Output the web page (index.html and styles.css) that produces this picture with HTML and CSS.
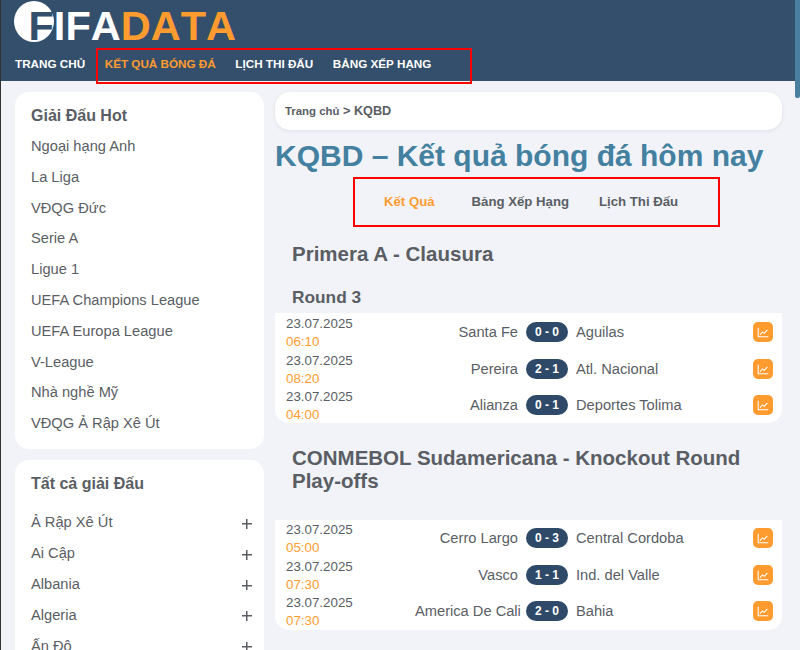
FILE: index.html
```html
<!DOCTYPE html>
<html lang="vi">
<head>
<meta charset="utf-8">
<title>KQBD</title>
<link rel="stylesheet" href="styles.css">
</head>
<body>
<div class="edge"></div>
<div class="scroll-thumb"></div>
<header class="header">
  <div class="logo">
    <span class="logo-f">F</span><span class="logo-white">IFA</span><span class="logo-orange">DATA</span>
  </div>
  <nav class="nav">
    <a class="nav-item">TRANG CHỦ</a>
    <a class="nav-item nav-active">KẾT QUẢ BÓNG ĐÁ</a>
    <a class="nav-item">LỊCH THI ĐẤU</a>
    <a class="nav-item">BẢNG XẾP HẠNG</a>
    <span class="red-box nav-box"></span>
  </nav>
</header>
<div class="layout">
  <aside class="sidebar">
    <section class="card hot">
      <h3 class="side-title">Giải Đấu Hot</h3>
      <ul class="side-list">
        <li>Ngoại hạng Anh</li>
        <li>La Liga</li>
        <li>VĐQG Đức</li>
        <li>Serie A</li>
        <li>Ligue 1</li>
        <li>UEFA Champions League</li>
        <li>UEFA Europa League</li>
        <li>V-League</li>
        <li>Nhà nghề Mỹ</li>
        <li>VĐQG Ả Rập Xê Út</li>
      </ul>
    </section>
    <section class="card all">
      <h3 class="side-title">Tất cả giải Đấu</h3>
      <ul class="side-list plus-list">
        <li><span>Ả Rập Xê Út</span><i class="plus"></i></li>
        <li><span>Ai Cập</span><i class="plus"></i></li>
        <li><span>Albania</span><i class="plus"></i></li>
        <li><span>Algeria</span><i class="plus"></i></li>
        <li><span>Ấn Độ</span><i class="plus"></i></li>
      </ul>
    </section>
  </aside>
  <main class="main">
    <div class="crumb"><span class="crumb-home">Trang chủ</span> &gt; KQBD</div>
    <h1 class="page-title">KQBD – Kết quả bóng đá hôm nay</h1>
    <div class="tabs">
      <a class="tab tab-active">Kết Quả</a>
      <a class="tab">Bảng Xếp Hạng</a>
      <a class="tab">Lịch Thi Đấu</a>
      <span class="red-box tabs-box"></span>
    </div>
    <h2 class="league">Primera A - Clausura</h2>
    <h3 class="round">Round 3</h3>
    <div class="matches">
      <div class="match"><div class="when"><div>23.07.2025</div><div class="time">06:10</div></div><div class="home">Santa Fe</div><div class="score">0 - 0</div><div class="away">Aguilas</div><span class="stat"><svg viewBox="0 0 16 16"><path d="M2.5 3v10.5H14M4.5 11l3-3 2 1.5 3.5-4"/></svg></span></div>
      <div class="match"><div class="when"><div>23.07.2025</div><div class="time">08:20</div></div><div class="home">Pereira</div><div class="score">2 - 1</div><div class="away">Atl. Nacional</div><span class="stat"><svg viewBox="0 0 16 16"><path d="M2.5 3v10.5H14M4.5 11l3-3 2 1.5 3.5-4"/></svg></span></div>
      <div class="match"><div class="when"><div>23.07.2025</div><div class="time">04:00</div></div><div class="home">Alianza</div><div class="score">0 - 1</div><div class="away">Deportes Tolima</div><span class="stat"><svg viewBox="0 0 16 16"><path d="M2.5 3v10.5H14M4.5 11l3-3 2 1.5 3.5-4"/></svg></span></div>
    </div>
    <h2 class="league league-two">CONMEBOL Sudamericana - Knockout Round Play-offs</h2>
    <div class="matches">
      <div class="match"><div class="when"><div>23.07.2025</div><div class="time">05:00</div></div><div class="home">Cerro Largo</div><div class="score">0 - 3</div><div class="away">Central Cordoba</div><span class="stat"><svg viewBox="0 0 16 16"><path d="M2.5 3v10.5H14M4.5 11l3-3 2 1.5 3.5-4"/></svg></span></div>
      <div class="match"><div class="when"><div>23.07.2025</div><div class="time">07:30</div></div><div class="home">Vasco</div><div class="score">1 - 1</div><div class="away">Ind. del Valle</div><span class="stat"><svg viewBox="0 0 16 16"><path d="M2.5 3v10.5H14M4.5 11l3-3 2 1.5 3.5-4"/></svg></span></div>
      <div class="match"><div class="when"><div>23.07.2025</div><div class="time">07:30</div></div><div class="home">America De Cali</div><div class="score">2 - 0</div><div class="away">Bahia</div><span class="stat"><svg viewBox="0 0 16 16"><path d="M2.5 3v10.5H14M4.5 11l3-3 2 1.5 3.5-4"/></svg></span></div>
    </div>
  </main>
</div>
</body>
</html>
```
FILE: styles.css
```css
* { box-sizing: border-box; }
html, body { height: 650px; overflow: hidden; }
body {
  margin: 0;
  background: #f1f3f8;
  color: #5a5e64;
  font-family: "Liberation Sans", Arial, sans-serif;
  font-size: 14.67px;
  position: relative;
}
.edge { position: absolute; left: 0; top: 0; width: 1px; height: 650px; background: #333; z-index: 3; }
.scroll-thumb { position: absolute; right: 0; top: 0; width: 5px; height: 98px; background: #4a7fa0; border-radius: 0 0 2px 2px; z-index: 3; }
.header { height: 81px; background: #344f6b; padding-left: 15px; position: relative; }
.logo { height: 49px; padding: 3px 0 0 13.5px; display: flex; align-items: flex-start; font-weight: 700; font-size: 41.5px; line-height: 46px; white-space: nowrap; isolation: isolate; font-kerning: none; }
.logo-f { color: #344f6b; position: relative; }
.logo-f::before { content: ""; position: absolute; left: -14.5px; top: -2px; width: 40px; height: 41px; border-radius: 50%; background: #fff; z-index: -1; }
.logo-white { color: #fff; }
.logo-orange { color: #ff9b2f; }
.nav { display: flex; gap: 19.6px; height: 28px; align-items: center; position: relative; }
.nav-item { color: #fff; font-size: 11.7px; font-weight: 700; white-space: nowrap; }
.nav-active { color: #ff9b2f; }
.red-box { position: absolute; border: 2px solid #f00; pointer-events: none; }
.nav-box { left: 81px; top: -1px; width: 376px; height: 36px; }
.layout { display: flex; gap: 11px; padding: 11px 18px 0 15px; align-items: flex-start; }
.sidebar { width: 249px; flex: none; display: flex; flex-direction: column; gap: 11px; }
.card { background: #fff; border-radius: 14px; padding: 13px 16px 0; }
.hot { height: 357px; }
.all { height: 300px; }
.side-title { margin: 0; font-size: 16px; line-height: 22px; font-weight: 700; color: #5a5e64; }
.side-list { list-style: none; margin: 0; padding: 0; }
.side-list li { height: 30.8px; line-height: 30.8px; white-space: nowrap; }
.hot .side-list { margin-top: 4px; }
.all .side-list { margin-top: 12.4px; }
.plus-list li { display: flex; justify-content: space-between; align-items: center; margin-right: -4px; }
.plus { width: 10px; height: 10px; position: relative; flex: none; margin-top: 2px; background: linear-gradient(#5a5e64, #5a5e64) center/10px 1.5px no-repeat, linear-gradient(#5a5e64, #5a5e64) center/1.5px 10px no-repeat; }
.main { width: 507px; flex: none; }
.crumb { height: 38px; background: #fff; border-radius: 15px; line-height: 38px; padding-left: 10px; font-size: 12.7px; font-weight: 700; box-shadow: 0 1px 4px rgba(0,0,0,.08); color: #5a5e64; }
.crumb-home { font-size: 11.4px; }
.page-title { margin: 7px 0 0; font-size: 30px; line-height: 37px; font-weight: 700; color: #44809f; white-space: nowrap; }
.tabs { display: flex; height: 49px; margin-top: 3px; position: relative; align-items: center; padding-left: 109px; gap: 30px; font-size: 13.2px; font-weight: 700; }
.tab { white-space: nowrap; }
.tab-active { color: #ff9b2f; margin-right: 7px; }
.tabs-box { left: 78px; top: 0; width: 367px; height: 50px; }
.league { margin: 16px 0 0 17px; font-size: 20.5px; line-height: 24px; font-weight: 700; color: #5a5e64; }
.round { margin: 21px 0 0 17px; font-size: 17.3px; line-height: 20px; font-weight: 700; }
.matches { background: #fff; border-radius: 0 0 14px 14px; margin-top: 6px; padding-top: 2px; height: 110px; }
.match { display: flex; height: 36.5px; align-items: center; padding: 0 9px 2px 11px; }
.when { width: 129px; flex: none; line-height: 18px; font-size: 13.33px; margin-top: 2px; }
.time { color: #ff9b2f; }
.home { width: 103px; text-align: right; white-space: nowrap; flex: none; }
.score { width: 42px; height: 20px; line-height: 20px; flex: none; margin: 0 8px; text-align: center; color: #fff; background: #2e4a68; border-radius: 10px; font-weight: 700; font-size: 12px; }
.away { flex: 1; white-space: nowrap; }
.stat { width: 20px; height: 20px; background: #ff9b2f; border-radius: 5px; flex: none; display: flex; align-items: center; justify-content: center; }
.stat svg { width: 14px; height: 14px; fill: none; stroke: #fff; stroke-width: 1.2; }
.league-two { margin-top: 22.5px; line-height: 23.5px; }
.league-two + .matches { margin-top: 27.5px; padding-top: 1px; }
```
